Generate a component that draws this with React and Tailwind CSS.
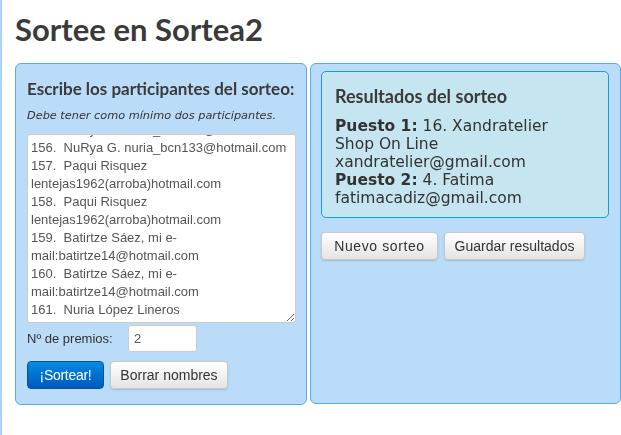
import React, { useEffect, useRef } from 'react';

const participantes = [
    '150.  Ana Martín anamartin@gmail.com',
    '151.  Lucía Pérez lucia.perez@hotmail.com',
    '152.  Carmen Ruiz carmenruiz@yahoo.es',
    '153.  Pilar Gómez pilargomez@gmail.com',
    '154.  Rosa Díaz rosadiaz@hotmail.com',
    '155.  NuRya G. nuria_bcn133@hotmail.com',
    '156.  NuRya G. nuria_bcn133@hotmail.com',
    '157.  Paqui Risquez lentejas1962(arroba)hotmail.com',
    '158.  Paqui Risquez lentejas1962(arroba)hotmail.com',
    '159.  Batirtze Sáez, mi e-mail:batirtze14@hotmail.com',
    '160.  Batirtze Sáez, mi e-mail:batirtze14@hotmail.com',
    '161.  Nuria López Lineros',
].join('\n');

const resultados = [
    { puesto: 1, texto: '16. Xandratelier Shop On Line xandratelier@gmail.com' },
    { puesto: 2, texto: '4. Fatima fatimacadiz@gmail.com' },
];

const Boton = ({ children, className = '' }) => (
    <button
        className={`h-[28px] whitespace-nowrap rounded-[4px] border border-[#c8c8c8] bg-gradient-to-b from-white to-[#e4e4e4] px-0 text-[14px] text-[#333] shadow-[0_1px_2px_rgba(0,0,0,0.15)] font-['Liberation_Sans',Arial,sans-serif] ${className}`}
    >
        {children}
    </button>
);

export default function App() {
    const areaRef = useRef(null);

    // el textarea aparece desplazado hasta el final
    useEffect(() => {
        if (areaRef.current) areaRef.current.scrollTop = areaRef.current.scrollHeight;
    }, []);

    return (
        <div className="min-h-[435px] border-l-2 border-[#a9d3f7] bg-white pl-[13px] text-[#333]">
            <h1 className="pt-[11px] text-[31px] font-bold leading-[36px] text-[#3a3a3a] font-['Lato','Open_Sans',sans-serif]">
                Sortee en Sortea2
            </h1>

            <div className="mt-[16px] flex gap-[3px]">
                {/* Panel izquierdo */}
                <div className="w-[292px] h-[342px] rounded-[6px] border border-[#5aaaf0] bg-[#bbdcf8] px-[11px] pt-[15px]">
                    <h2 className="text-[17px] font-bold leading-[20px] text-[#3a3a3a] font-['Lato','Open_Sans',sans-serif]">
                        Escribe los participantes del sorteo:
                    </h2>
                    <p className="mt-[10px] text-[11.3px] italic leading-[14px] text-[#333] font-['DejaVu_Sans',Verdana,sans-serif]">
                        Debe tener como mínimo dos participantes.
                    </p>
                    <textarea
                        ref={areaRef}
                        defaultValue={participantes}
                        className="mt-[11px] block h-[189px] w-[269px] resize-y rounded-[3px] border border-[#ccc] bg-white px-[3px] py-[3px] text-[13px] leading-[18px] text-[#555] outline-none [scrollbar-width:none] font-['Liberation_Sans',Arial,sans-serif]"
                    />
                    <div className="mt-[2px] flex items-center font-['Liberation_Sans',Arial,sans-serif]">
                        <span className="w-[101px] text-[13px] text-[#333]">Nº de premios:</span>
                        <input
                            defaultValue="2"
                            className="h-[27px] w-[69px] rounded-[3px] border border-[#ccc] bg-white px-[5px] text-[13px] text-[#555] outline-none"
                        />
                    </div>
                    <div className="mt-[9px] flex gap-[6px]">
                        <button className="h-[28px] w-[77px] whitespace-nowrap rounded-[4px] border border-[#0055aa] bg-gradient-to-b from-[#0a8ae0] to-[#0058c0] text-[14px] tracking-[-0.3px] text-white font-['Liberation_Sans',Arial,sans-serif]">
                            ¡Sortear!
                        </button>
                        <Boton className="w-[118px]">Borrar nombres</Boton>
                    </div>
                </div>

                {/* Panel derecho */}
                <div className="w-[311px] h-[341px] rounded-[6px] border border-[#5aaaf0] bg-[#bbdcf8] pl-[10px] pr-[11px] pt-[7px]">
                    <div className="h-[147px] rounded-[5px] border border-[#1a9ad6] bg-[#c5e5f0] pl-[13px] pt-[13px]">
                        <h2 className="text-[18px] font-bold leading-[22px] text-[#3a3a3a] font-['Lato','Open_Sans',sans-serif]">
                            Resultados del sorteo
                        </h2>
                        <div className="mt-[10px] w-[250px] text-[15.5px] leading-[18px] text-[#333] font-['DejaVu_Sans',Verdana,sans-serif]">
                            {resultados.map(r => (
                                <div key={r.puesto}>
                                    <b>Puesto {r.puesto}:</b> {r.texto}
                                </div>
                            ))}
                        </div>
                    </div>
                    <div className="mt-[14px] flex gap-[6px]">
                        <Boton className="w-[117px] tracking-[0.6px]">Nuevo sorteo</Boton>
                        <Boton className="w-[141px]">Guardar resultados</Boton>
                    </div>
                </div>
            </div>
        </div>
    );
}
